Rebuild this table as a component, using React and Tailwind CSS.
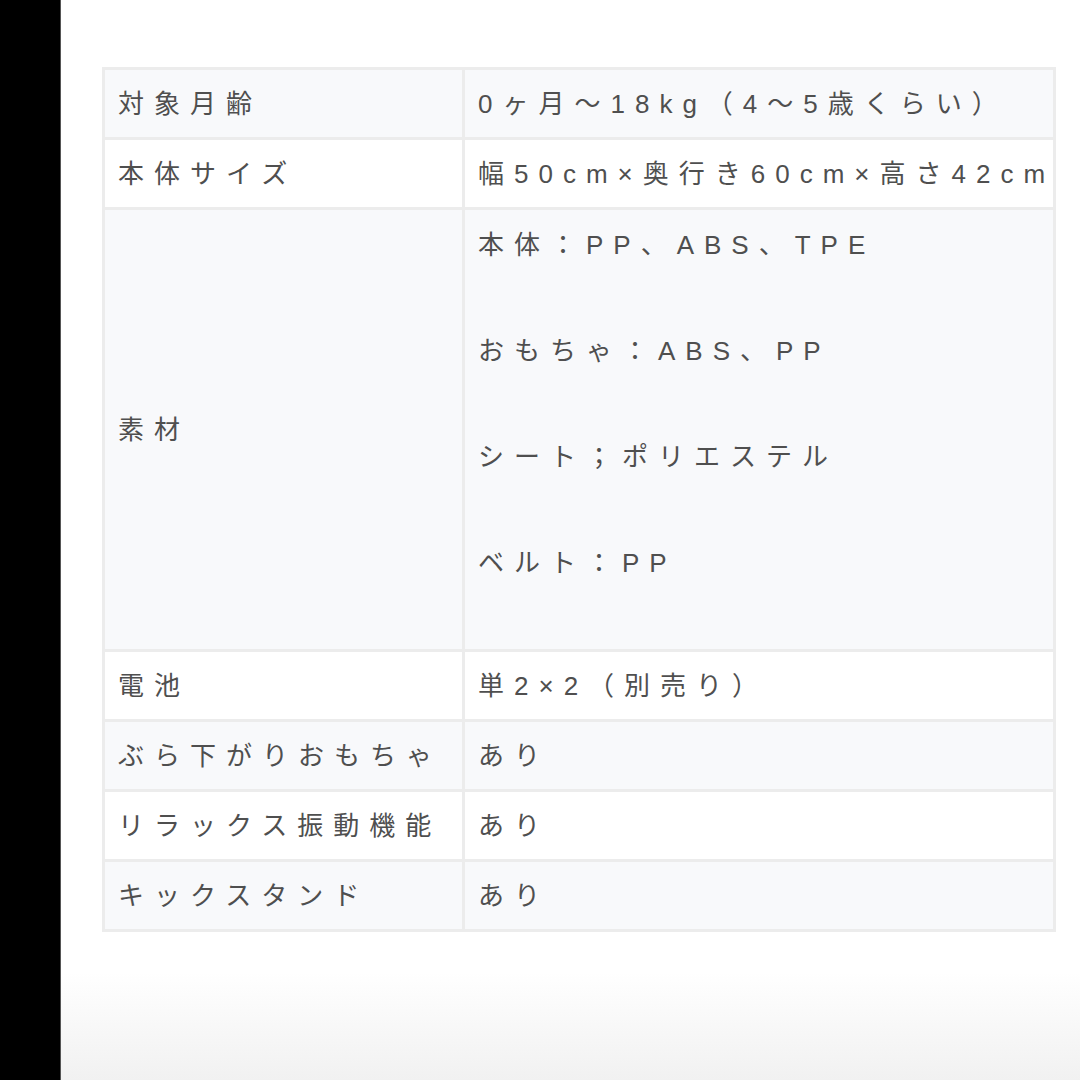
import React from "react";

const rows = [
  ["対象月齢", ["0ヶ月～18kg（4～5歳くらい）"]],
  ["本体サイズ", ["幅50cm×奥行き60cm×高さ42cm"]],
  ["素材", ["本体：PP、ABS、TPE", "おもちゃ：ABS、PP", "シート；ポリエステル", "ベルト：PP"]],
  ["電池", ["単2×2（別売り）"]],
  ["ぶら下がりおもちゃ", ["あり"]],
  ["リラックス振動機能", ["あり"]],
  ["キックスタンド", ["あり"]],
];

export default function App() {
  return (
    <div
      className="flex w-[1080px] h-[1080px] overflow-hidden bg-white"
      style={{ fontFamily: '"Liberation Sans", "Noto Sans CJK JP", sans-serif' }}
    >
      <div className="w-[61px] shrink-0 bg-black border-r border-[#555]" />
      <div className="flex-1 flex flex-col bg-gradient-to-b from-white from-[90%] to-[#f1f1f1]">
        <div className="pt-[67px] pl-[41px] pr-[24px]">
          <table className="w-full table-fixed border-collapse border-[3px] border-[#ececec] text-[26px] text-[#4f4f4f] tracking-[10px]">
            <colgroup>
              <col className="w-[360px]" />
              <col />
            </colgroup>
            <tbody>
              {rows.map(([label, values], i) => {
                const multi = values.length > 1;
                return (
                  <tr key={i} className={i % 2 === 0 ? "bg-[#f8f9fb]" : "bg-white"}>
                    <td className="border-[3px] border-[#ececec] pl-[13px] pr-0 py-0 h-[70px] align-middle whitespace-nowrap leading-[1]">
                      {label}
                    </td>
                    <td
                      className={
                        "border-[3px] border-[#ececec] pl-[13px] pr-0 whitespace-nowrap align-middle " +
                        (multi ? "pt-[8px] pb-[7px]" : "py-0 leading-[1]")
                      }
                    >
                      {multi
                        ? values.map((v, j) => (
                            <p key={j} className="leading-[54px] mb-[52px]">
                              {v}
                            </p>
                          ))
                        : values[0]}
                    </td>
                  </tr>
                );
              })}
            </tbody>
          </table>
        </div>
      </div>
    </div>
  );
}
